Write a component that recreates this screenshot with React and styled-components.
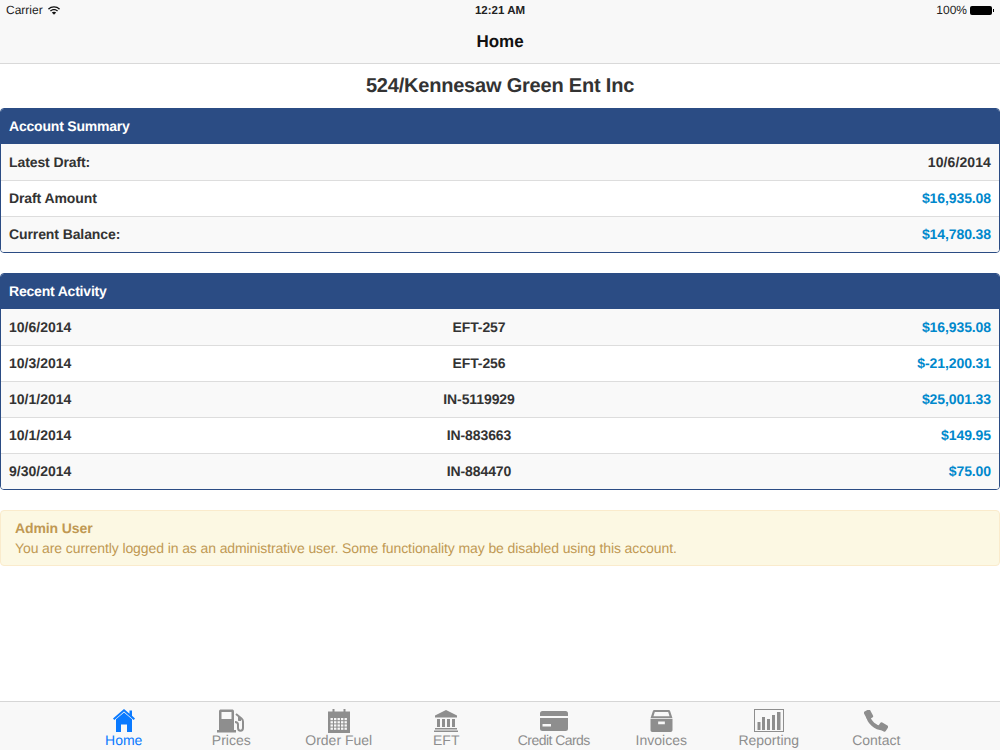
import styled, { createGlobalStyle } from 'styled-components';

const summary = [
  { label: 'Latest Draft:', value: '10/6/2014' },
  { label: 'Draft Amount', value: '$16,935.08', money: true },
  { label: 'Current Balance:', value: '$14,780.38', money: true }
];

const activity = [
  { date: '10/6/2014', ref: 'EFT-257', amount: '$16,935.08' },
  { date: '10/3/2014', ref: 'EFT-256', amount: '$-21,200.31' },
  { date: '10/1/2014', ref: 'IN-5119929', amount: '$25,001.33' },
  { date: '10/1/2014', ref: 'IN-883663', amount: '$149.95' },
  { date: '9/30/2014', ref: 'IN-884470', amount: '$75.00' }
];

function HomeIcon() {
  return (
    <svg width="22" height="23" viewBox="0 0 22 23" fill="currentColor">
      <path d="M11 0l5.500 4.700V1.500H19v5.300l3 2.600-1.300 1.500L11 2.600 1.300 10.900 0 9.400 11 0z" />
      <path d="M11 3.500l8 6.800V23h-5v-7.500H8V23H3V10.300l8-6.800z" />
    </svg>
  );
}

function PumpIcon() {
  return (
    <svg width="29" height="24" viewBox="0 0 29 24" fill="currentColor">
      <path fillRule="evenodd" d="M2 2.500C2 1.100 3 .5 4 .5h11c1 0 2 .6 2 2V21h2v2.500H0V21h2V2.500zM4.500 3v7h10V3h-10z" />
      <path d="M19 5l5.500 4.500c1 .8 1.500 1.700 1.500 3V19c0 1.600-1 2.700-2.500 2.700S21 20.600 21 19v-3.500c0-1.500-1-2.500-3-2.500" fill="none" stroke="currentColor" strokeWidth="2" />
      <path d="M21 8h3v4h-2c-.6 0-1-.4-1-1V8z" />
    </svg>
  );
}

function CalendarIcon() {
  const cells = [];
  for (let y = 9; y < 21; y += 3.2) {
    for (let x = 2.500; x < 19; x += 3.5) {
      cells.push(<rect key={x + '-' + y} x={x} y={y} width="2.400" height="2.200" fill="#f8f8f8" />);
    }
  }
  return (
    <svg width="22" height="24" viewBox="0 0 22 24" fill="currentColor">
      <rect x="4.500" y="0" width="2" height="4" />
      <rect x="15.500" y="0" width="2" height="4" />
      <rect x="0" y="2.500" width="22" height="21.500" />
      {cells}
    </svg>
  );
}

function BankIcon() {
  return (
    <svg width="24" height="22" viewBox="0 0 24 22" fill="currentColor">
      <path d="M12 0l11 5.500V7.500H1V5.500L12 0z" />
      <rect x="3" y="9" width="3" height="8" />
      <rect x="8" y="9" width="3" height="8" />
      <rect x="13" y="9" width="3" height="8" />
      <rect x="18" y="9" width="3" height="8" />
      <rect x="1" y="18" width="22" height="1.500" />
      <rect x="0" y="20.500" width="24" height="1.500" />
    </svg>
  );
}

function CardIcon() {
  return (
    <svg width="28" height="20" viewBox="0 0 28 20" fill="currentColor">
      <path d="M2.500 0h23A2.500 2.500 0 0 1 28 2.500V5H0V2.500A2.500 2.500 0 0 1 2.500 0z" />
      <path fillRule="evenodd" d="M0 7h28v10.500a2.500 2.500 0 0 1-2.500 2.500h-23A2.500 2.500 0 0 1 0 17.500V7zM2.500 13v2.500H11V13H2.500z" />
    </svg>
  );
}

function ArchiveIcon() {
  return (
    <svg width="23" height="22" viewBox="0 0 24 23" fill="currentColor">
      <path fillRule="evenodd" d="M4.500 0h15c.8 0 1.300.4 1.500 1l2.500 7.500H.5L3 1c.2-.6.700-1 1.500-1zM5 2L3.600 6.500h16.800L19 2H5z" />
      <path fillRule="evenodd" d="M.5 9.500h23V21c0 1.200-.8 2-2 2h-19c-1.200 0-2-.8-2-2V9.500zM8.500 12v3h7v-3h-7z" />
    </svg>
  );
}

function ChartIcon() {
  return (
    <svg width="30" height="23" viewBox="0 0 30 23" fill="currentColor">
      <rect x=".5" y=".5" width="29" height="22" fill="none" stroke="currentColor" />
      <rect x="3.500" y="13" width="3" height="8" />
      <rect x="8" y="8" width="3" height="13" />
      <rect x="13" y="10" width="3" height="11" />
      <rect x="18" y="6" width="3" height="15" />
      <rect x="23" y="3" width="3.500" height="18" />
    </svg>
  );
}

function PhoneIcon() {
  return (
    <svg width="24" height="22" viewBox="0 0 24 22" fill="currentColor">
      <path d="M4 5c.5 7 7.500 13 15 13.500" fill="none" stroke="currentColor" strokeWidth="4" />
      <rect x="1" y="0" width="7" height="9" rx="1.500" transform="rotate(-28 4.500 4.500)" />
      <rect x="15.500" y="12.500" width="7" height="9" rx="1.500" transform="rotate(-58 19 17)" />
    </svg>
  );
}

const tabs = [
  { label: 'Home', icon: <HomeIcon />, active: true },
  { label: 'Prices', icon: <PumpIcon /> },
  { label: 'Order Fuel', icon: <CalendarIcon /> },
  { label: 'EFT', icon: <BankIcon /> },
  { label: 'Credit Cards', icon: <CardIcon />, tight: true },
  { label: 'Invoices', icon: <ArchiveIcon /> },
  { label: 'Reporting', icon: <ChartIcon /> },
  { label: 'Contact', icon: <PhoneIcon /> }
];

function App() {
  return (
    <Page>
      <GlobalStyle />
      <TopBar>
        <StatusBar>
          <StatusSide>
            Carrier
            <svg width="12" height="9" viewBox="0 0 14 10" fill="#111">
              <path d="M7 0c2.700 0 5.100 1 7 2.800l-1.100 1.200C11.300 2.500 9.300 1.600 7 1.600S2.700 2.500 1.100 4L0 2.800C1.900 1 4.300 0 7 0z" />
              <path d="M7 3.200c1.800 0 3.400.7 4.700 1.900l-1.100 1.200C9.600 5.400 8.400 4.800 7 4.800s-2.600.6-3.600 1.500L2.300 5.100C3.600 3.900 5.200 3.200 7 3.200z" />
              <path d="M7 6.400c1 0 1.800.4 2.500 1L7 10 4.500 7.400c.7-.6 1.500-1 2.500-1z" />
            </svg>
          </StatusSide>
          <StatusTime>12:21 AM</StatusTime>
          <StatusSide $right>
            100%
            <Battery />
          </StatusSide>
        </StatusBar>
        <NavTitle>Home</NavTitle>
      </TopBar>

      <Content>
        <AccountTitle>524/Kennesaw Green Ent Inc</AccountTitle>

        <Panel>
          <PanelHeading>Account Summary</PanelHeading>
          {summary.map((row) => (
            <SummaryRow key={row.label}>
              <RowLabel>{row.label}</RowLabel>
              <Value $money={row.money}>{row.value}</Value>
            </SummaryRow>
          ))}
        </Panel>

        <Panel>
          <PanelHeading>Recent Activity</PanelHeading>
          {activity.map((row) => (
            <ActivityRow key={row.ref}>
              <span>{row.date}</span>
              <Reference>{row.ref}</Reference>
              <Value $money>{row.amount}</Value>
            </ActivityRow>
          ))}
        </Panel>

        <Alert>
          <strong>Admin User</strong>
          <div>You are currently logged in as an administrative user. Some functionality may be disabled using this account.</div>
        </Alert>
      </Content>

      <TabBar>
        {tabs.map((tab) => (
          <Tab key={tab.label} $active={tab.active}>
            <TabIcon>{tab.icon}</TabIcon>
            <TabLabel $tight={tab.tight}>{tab.label}</TabLabel>
          </Tab>
        ))}
      </TabBar>
    </Page>
  );
}

const GlobalStyle = createGlobalStyle`
  html, body {
    margin: 0;
    padding: 0;
    background: #fff;
  }
  body {
    font-family: "Liberation Sans", Arial, sans-serif;
    text-rendering: geometricPrecision;
  }
`;

const Page = styled.div`
  width: 1000px;
  height: 750px;
  display: flex;
  flex-direction: column;
  overflow: hidden;
  color: #333;
`;

const TopBar = styled.header`
  height: 63px;
  flex: none;
  background: #f8f8f8;
  border-bottom: 1px solid #d9d9d9;
`;

const StatusBar = styled.div`
  height: 20px;
  padding: 0 6px;
  display: grid;
  grid-template-columns: 1fr auto 1fr;
  align-items: center;
  font-size: 12px;
  color: #222;
`;

const StatusSide = styled.div`
  display: flex;
  align-items: center;
  gap: ${({ $right }) => ($right ? '3px' : '5px')};
  justify-content: ${({ $right }) => ($right ? 'flex-end' : 'flex-start')};
`;

const StatusTime = styled.div`
  padding-top: 1px;
  font-weight: 700;
  font-size: 11.500px;
`;

const Battery = styled.span`
  position: relative;
  width: 22px;
  height: 9px;
  margin-right: 2px;
  background: #000;
  border-radius: 2px;
  &::after {
    content: '';
    position: absolute;
    right: -2px;
    top: 3px;
    width: 1px;
    height: 3px;
    background: #000;
  }
`;

const NavTitle = styled.div`
  height: 43px;
  line-height: 43px;
  text-align: center;
  font-size: 17px;
  font-weight: 700;
  color: #111;
`;

const Content = styled.main`
  flex: 1;
  display: flex;
  flex-direction: column;
`;

const AccountTitle = styled.h1`
  margin: 0;
  height: 44px;
  line-height: 44px;
  text-align: center;
  font-size: 20px;
  font-weight: 700;
  letter-spacing: -0.2px;
  color: #333;
`;

const Panel = styled.section`
  margin-bottom: 20px;
  border: 1px solid #2b4c84;
  border-radius: 4px;
  overflow: hidden;
`;

const PanelHeading = styled.div`
  height: 35px;
  line-height: 35px;
  padding: 0 8px;
  background: #2b4c84;
  color: #fff;
  font-size: 14px;
  font-weight: 700;
  letter-spacing: -0.2px;
`;

const SummaryRow = styled.div`
  height: 36px;
  padding: 0 8px 1px;
  display: flex;
  align-items: center;
  justify-content: space-between;
  box-sizing: border-box;
  font-size: 14px;
  font-weight: 700;
  background: #fff;
  border-top: 1px solid #ddd;
  &:nth-child(even) {
    background: #f9f9f9;
  }
  &:nth-child(2) {
    border-top: 0;
  }
`;

const ActivityRow = styled(SummaryRow)`
  display: grid;
  grid-template-columns: 320px 300px 1fr;
`;

const RowLabel = styled.span`
  letter-spacing: -0.1px;
`;

const Reference = styled.span`
  text-align: center;
  letter-spacing: -0.1px;
`;

const Value = styled.span`
  text-align: right;
  letter-spacing: ${({ $money }) => ($money ? '-0.1px' : '0.1px')};
  color: ${({ $money }) => ($money ? '#0088cc' : '#333')};
`;

const Alert = styled.div`
  height: 56px;
  padding: 7px 14px 0;
  box-sizing: border-box;
  background: #fcf8e3;
  border: 1px solid #faebcc;
  border-radius: 4px;
  color: #c09853;
  font-size: 14px;
  line-height: 20px;
  letter-spacing: -0.1px;
`;

const TabBar = styled.nav`
  flex: none;
  height: 48px;
  padding: 0 70px;
  display: grid;
  grid-template-columns: repeat(8, 1fr);
  background: #f8f8f8;
  border-top: 1px solid #d6d6d6;
`;

const Tab = styled.div`
  display: flex;
  flex-direction: column;
  align-items: center;
  font-size: 14px;
  line-height: 16px;
  color: ${({ $active }) => ($active ? '#0a7aff' : '#8e8e8e')};
`;

const TabIcon = styled.div`
  height: 30px;
  padding-top: 7px;
  box-sizing: border-box;
  display: flex;
  align-items: center;
  justify-content: center;
`;

const TabLabel = styled.span`
  letter-spacing: ${({ $tight }) => ($tight ? '-0.55px' : '0')};
`;

export default App;
